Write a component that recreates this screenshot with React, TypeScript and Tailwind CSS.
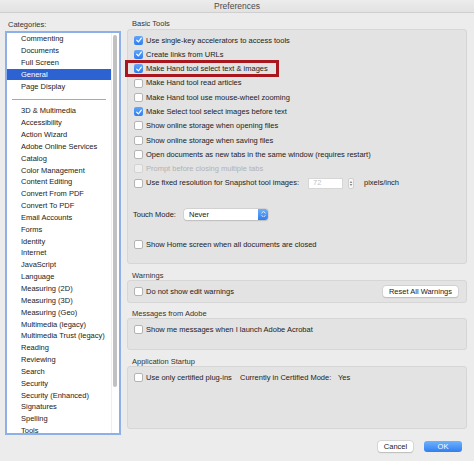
import clsx from 'clsx';

const topCategories = ['Commenting', 'Documents', 'Full Screen', 'General', 'Page Display'];

const moreCategories = [
  '3D & Multimedia',
  'Accessibility',
  'Action Wizard',
  'Adobe Online Services',
  'Catalog',
  'Color Management',
  'Content Editing',
  'Convert From PDF',
  'Convert To PDF',
  'Email Accounts',
  'Forms',
  'Identity',
  'Internet',
  'JavaScript',
  'Language',
  'Measuring (2D)',
  'Measuring (3D)',
  'Measuring (Geo)',
  'Multimedia (legacy)',
  'Multimedia Trust (legacy)',
  'Reading',
  'Reviewing',
  'Search',
  'Security',
  'Security (Enhanced)',
  'Signatures',
  'Spelling',
  'Tools',
];

const basicTools = [
  { label: 'Use single-key accelerators to access tools', checked: true },
  { label: 'Create links from URLs', checked: true },
  { label: 'Make Hand tool select text & images', checked: true, highlight: true },
  { label: 'Make Hand tool read articles' },
  { label: 'Make Hand tool use mouse-wheel zooming' },
  { label: 'Make Select tool select images before text', checked: true },
  { label: 'Show online storage when opening files' },
  { label: 'Show online storage when saving files' },
  { label: 'Open documents as new tabs in the same window (requires restart)' },
  { label: 'Prompt before closing multiple tabs', disabled: true },
];

function Check({ checked, disabled }: { checked?: boolean; disabled?: boolean }) {
  if (checked) {
    return (
      <span className="flex h-[9px] w-[9px] shrink-0 items-center justify-center rounded-[2px] bg-linear-to-b from-[#62a6f8] to-[#2d7cf0]">
        <svg viewBox="0 0 10 10" className="h-[8px] w-[8px]">
          <path d="M2.2 5.3 4.3 7.4 7.9 2.6" fill="none" stroke="white" strokeWidth="1.5" strokeLinecap="round" strokeLinejoin="round" />
        </svg>
      </span>
    );
  }
  return (
    <span
      className={clsx(
        'h-[9px] w-[9px] shrink-0 rounded-[2px] border',
        disabled ? 'border-[#d3d3d3] bg-[#efefef]' : 'border-[#b4b4b4] bg-white'
      )}
    />
  );
}

function Row({ label, checked, disabled }: { label: string; checked?: boolean; disabled?: boolean }) {
  return (
    <div className="flex h-[14.3px] items-center gap-[2px] pl-[6px]">
      <Check checked={checked} disabled={disabled} />
      <span className={clsx('ml-[1px] whitespace-nowrap', disabled ? 'text-[#b2b2b2]' : 'text-[#222]')}>{label}</span>
    </div>
  );
}

function SectionLabel({ children, className }: { children: string; className?: string }) {
  return <div className={clsx('h-[9px] pl-[5px] leading-[9px] text-[#333]', className)}>{children}</div>;
}

function Box({ children, className }: { children: React.ReactNode; className?: string }) {
  return <div className={clsx('rounded-[3px] border border-[#d6d6d6] bg-[#e3e3e3]', className)}>{children}</div>;
}

export default function App() {
  return (
    <div
      className="flex h-[461px] w-[474px] flex-col overflow-hidden bg-[#ececec] text-[7.5px] text-[#222]"
      style={{ fontFamily: '"Liberation Sans", Arial, sans-serif' }}
    >
      {/* Title bar */}
      <div className="flex h-[13px] shrink-0 items-center justify-center border-b border-[#cfcfcf] bg-linear-to-b from-[#ececec] to-[#e2e2e2] text-[8.5px] text-[#4a4a4a]">
        Preferences
      </div>

      <div className="flex flex-1">
        {/* Categories */}
        <div className="w-[121px] shrink-0 pl-[5px] pt-[6px]">
          <div className="h-[11px] pl-[3px] leading-[11px] text-[#333]">Categories:</div>
          <div className="mt-[1px] flex h-[404px] overflow-hidden border-2 border-[#8db0e8] bg-white">
            <div className="flex-1 overflow-hidden">
              {topCategories.map((c) => (
                <div
                  key={c}
                  className={clsx(
                    'flex h-[11.85px] items-center whitespace-nowrap pl-[14px]',
                    c === 'General' ? 'bg-[#2d62d3] text-white' : 'text-[#222]'
                  )}
                >
                  {c}
                </div>
              ))}
              <div className="h-[12.8px] px-[5px] pt-[7px]">
                <div className="h-px bg-[#a9a9a9]" />
              </div>
              {moreCategories.map((c) => (
                <div key={c} className="flex h-[11.85px] items-center whitespace-nowrap pl-[14px] text-[#222]">
                  {c}
                </div>
              ))}
            </div>
            <div className="w-[8px] shrink-0 border-l border-[#efefef] pt-[2px]">
              <div className="ml-[1px] h-[352px] w-[4px] rounded-full bg-[#c1c1c1]" />
            </div>
          </div>
        </div>

        {/* Settings */}
        <div className="ml-[6px] w-[340px] pt-[6px]">
          <SectionLabel className="!h-[10px] !leading-[10px]">Basic Tools</SectionLabel>
          <Box className="h-[235px] pt-[3px]">
            {basicTools.map((t) => (
              <div key={t.label} className="relative">
                <Row label={t.label} checked={t.checked} disabled={t.disabled} />
                {t.highlight && (
                  <div className="pointer-events-none absolute left-[-3px] top-[-1.5px] h-[17px] w-[154px] border-[3px] border-[#a8161e]" />
                )}
              </div>
            ))}
            <div className="flex h-[14.3px] items-center gap-[2px] pl-[6px]">
              <Check />
              <span className="ml-[1px] w-[160px] whitespace-nowrap">Use fixed resolution for Snapshot tool images:</span>
              <span className="flex h-[11px] w-[35px] items-center border border-[#d6d6d6] bg-white pl-[4px] text-[#c4c4c4]">72</span>
              <span className="ml-[3px] flex h-[11px] w-[6px] flex-col items-center justify-center gap-[1px] rounded-[2px] border border-[#d0d0d0] bg-[#f7f7f7]">
                <svg viewBox="0 0 4 3" className="h-[2px] w-[4px]"><path d="M0 3 2 0 4 3Z" fill="#8a8a8a" /></svg>
                <svg viewBox="0 0 4 3" className="h-[2px] w-[4px]"><path d="M0 0 2 3 4 0Z" fill="#8a8a8a" /></svg>
              </span>
              <span className="ml-[8px]">pixels/inch</span>
            </div>

            <div className="mt-[18px] flex h-[12px] items-center pl-[5px]">
              <span className="w-[51px]">Touch Mode:</span>
              <div className="flex h-[11px] w-[84px] items-center rounded-[3px] bg-white shadow-[0_0_0_0.5px_#c4c4c4,0_0.5px_1px_#bbb]">
                <span className="flex-1 pl-[5px]">Never</span>
                <span className="flex h-[11px] w-[10px] flex-col items-center justify-center gap-[1px] rounded-r-[3px] bg-linear-to-b from-[#6cb0fa] to-[#2f7df0]">
                  <svg viewBox="0 0 6 3" className="h-[2.5px] w-[5px]"><path d="M0.5 2.7 3 0.5 5.5 2.7" fill="none" stroke="white" strokeWidth="1" /></svg>
                  <svg viewBox="0 0 6 3" className="h-[2.5px] w-[5px]"><path d="M0.5 0.3 3 2.5 5.5 0.3" fill="none" stroke="white" strokeWidth="1" /></svg>
                </span>
              </div>
            </div>

            <div className="mt-[17px]">
              <Row label="Show Home screen when all documents are closed" />
            </div>
          </Box>

          <SectionLabel className="mt-[7px]">Warnings</SectionLabel>
          <Box className="flex h-[23px] items-center pr-[8px]">
            <div className="flex-1">
              <Row label="Do not show edit warnings" />
            </div>
            <button className="flex h-[10.5px] w-[75px] items-center justify-center rounded-[3px] bg-white text-[#222] shadow-[0_0_0_0.5px_#c4c4c4,0_0.5px_1px_#bbb]">
              Reset All Warnings
            </button>
          </Box>

          <SectionLabel className="mt-[6px]">Messages from Adobe</SectionLabel>
          <Box className="h-[32px] pt-[3px]">
            <Row label="Show me messages when I launch Adobe Acrobat" />
          </Box>

          <SectionLabel className="mt-[7px]">Application Startup</SectionLabel>
          <Box className="h-[63px] pt-[3px]">
            <div className="flex h-[14.3px] items-center">
              <div className="w-[112px]">
                <Row label="Use only certified plug-ins" />
              </div>
              <span className="w-[98px] whitespace-nowrap">Currently in Certified Mode:</span>
              <span>Yes</span>
            </div>
          </Box>

          <div className="mt-[12px] flex justify-end gap-[11px] pr-[5px]">
            <button className="flex h-[10.5px] w-[35px] items-center justify-center rounded-[3px] bg-white text-[#222] shadow-[0_0_0_0.5px_#c4c4c4,0_0.5px_1px_#bbb]">
              Cancel
            </button>
            <button className="flex h-[11px] w-[38px] items-center justify-center rounded-[3px] bg-linear-to-b from-[#6fb2fb] to-[#2f7ef1] text-white">
              OK
            </button>
          </div>
        </div>
      </div>
    </div>
  );
}
